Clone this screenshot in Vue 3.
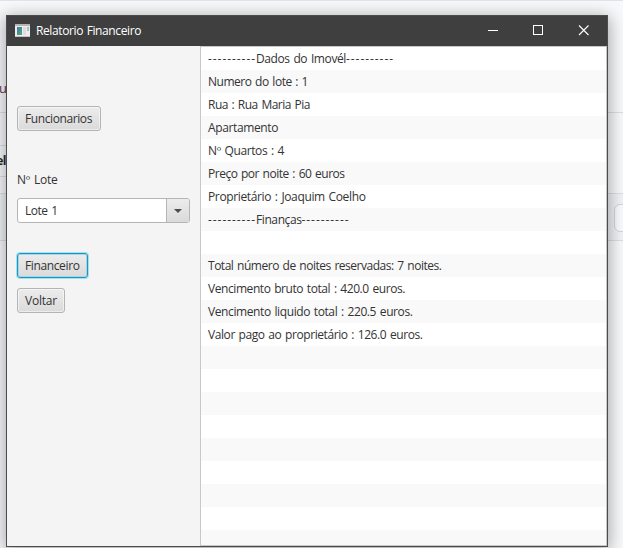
<script setup>
const dashes = { text: '----------', width: 48 }
const details = [
  [dashes, { text: 'Dados do Imovél', width: 90 }, dashes],
  [{ text: 'Numero do lote : 1', width: 100 }],
  [{ text: 'Rua : Rua Maria Pia', width: 102 }],
  [{ text: 'Apartamento', width: 70 }],
  [{ text: 'Nº Quartos : 4', width: 76 }],
  [{ text: 'Preço por noite : 60 euros', width: 136.5 }],
  [{ text: 'Proprietário : Joaquim Coelho', width: 157.5 }],
  [dashes, { text: 'Finanças', width: 45.5 }, dashes],
  [],
  [{ text: 'Total número de noites reservadas: 7 noites.', width: 233.5 }],
  [{ text: 'Vencimento bruto total : 420.0 euros.', width: 197 }],
  [{ text: 'Vencimento liquido total : 220.5 euros.', width: 204.5 }],
  [{ text: 'Valor pago ao proprietário : 126.0 euros.', width: 214.5 }]
]
const rows = Array.from({ length: 22 }, (_, i) => details[i] || [])

// Spreads a label's letters so that it fills its nominal width.
const vFit = {
  mounted(el, { value }) {
    const n = el.textContent.length
    if (!n || !value) return
    el.style.letterSpacing = (value - el.getBoundingClientRect().width) / n + 'px'
  }
}
</script>

<template>
  <div class="desktop">
    <div class="backdrop">
      <div class="band top"><span class="frag">u</span></div>
      <div class="band second"></div>
      <div class="band third"><b class="frag">el</b></div>
      <div class="band fourth"></div>
      <div class="band fifth"><i class="stub"></i></div>
    </div>
    <section class="window">
      <header class="titlebar">
        <svg class="app-icon" width="15" height="13" viewBox="0 0 15 13">
          <defs>
            <linearGradient id="pane" x1="0" y1="0" x2="1" y2="1">
              <stop offset="0" stop-color="#4777a3" />
              <stop offset="1" stop-color="#4fae79" />
            </linearGradient>
          </defs>
          <rect width="15" height="13" fill="#eeecee" />
          <rect width="15" height="2" fill="#b7b3b4" />
          <rect x="2" y="3" width="5" height="8" fill="url(#pane)" />
          <rect x="8" y="3" width="3" height="8" fill="#dedcde" />
          <rect x="12" y="3" width="2" height="4" fill="#9cc6c0" />
          <path d="M0 12.5H15" stroke="#c5c1c3" />
        </svg>
        <h1 class="title"><span v-fit="105">Relatorio Financeiro</span></h1>
        <div class="controls">
          <svg width="46" height="30" viewBox="0 0 46 30"><path d="M18 14.5h10" stroke="#fff" /></svg>
          <svg width="45" height="30" viewBox="0 0 45 30"><rect x="17.5" y="9.500" width="9" height="9" fill="none" stroke="#fff" /></svg>
          <svg width="46" height="30" viewBox="0 0 46 30"><path d="M18 9.500l9.500 9.500M27.500 9.500l-9.500 9.500" stroke="#fff" stroke-width="1.1" /></svg>
        </div>
      </header>
      <main class="content">
        <aside class="side">
          <button class="btn staff"><span v-fit="67">Funcionarios</span></button>
          <label class="label"><span v-fit="40.5">Nº Lote</span></label>
          <div class="combo">
            <div class="value"><span v-fit="32.5">Lote 1</span></div>
            <div class="arrow"><svg width="8" height="4" viewBox="0 0 8 4"><path d="M0 0H8L4 4Z" fill="#4c4c4c" /></svg></div>
          </div>
          <button class="btn finance focused"><span v-fit="54.5">Financeiro</span></button>
          <button class="btn back"><span v-fit="32">Voltar</span></button>
        </aside>
        <ul class="list">
          <li v-for="(row, i) in rows" :key="i">
            <span v-for="(part, j) in row" :key="j" v-fit="part.width">{{ part.text }}</span>
          </li>
        </ul>
      </main>
    </section>
  </div>
</template>

<style>
body { margin: 0; overflow: hidden; }
</style>

<style scoped>
* { box-sizing: border-box; }
.desktop {
  position: relative;
  width: 623px;
  height: 548px;
  padding: 14px 15px 1px 6px;
  overflow: hidden;
  background: #f8f9fb;
  border-top: 1px solid #e0e2ea;
  font: 12px/16px "Open Sans", "Noto Sans", sans-serif;
  word-spacing: 1px;
  color: #333;
}
.backdrop { position: absolute; inset: 0; padding-top: 75px; }
.band { border-bottom: 1px solid #dcdfe4; }
.top { height: 37px; }
.second { width: 300px; height: 33px; }
.third { width: 300px; height: 31px; padding-top: 7px; }
.fourth { height: 17px; }
.fifth { height: 47px; background: #f1f3f6; padding: 10px 0 0 614px; }
.frag { display: flex; justify-content: flex-end; width: 7px; font-size: 13px; color: #6c3050; }
.top .frag { padding-top: 4px; }
b.frag { width: 6px; font-size: 12px; letter-spacing: -.5px; color: #24292e; }
.stub { display: block; width: 20px; height: 28px; border: 1px solid #d2d6da; border-radius: 6px; background: #fafbfc; }
.window {
  position: relative;
  display: flex;
  flex-direction: column;
  width: 602px;
  height: 532px;
  border: 1px solid #4b4d4b;
  background: #f4f4f4;
  box-shadow: 0 3px 16px 1px rgba(0, 0, 0, .36);
}
.titlebar { display: flex; align-items: center; height: 30px; background: #3f3f3f; padding-left: 8px; }
.app-icon { margin-top: -1px; }
.title { margin: 0 0 0 6px; font: inherit; color: #fff; white-space: nowrap; }
.controls { display: flex; margin-left: auto; }
.content { display: flex; flex: 1; }
.side { display: flex; flex-direction: column; align-items: flex-start; width: 193px; padding: 60px 10px 0; }
.btn {
  height: 25px;
  padding: 0 7px;
  border: 1px solid #b4b4b4;
  border-radius: 3px;
  background: linear-gradient(#ececec, #dadada);
  box-shadow: inset 0 0 0 1px rgba(255, 255, 255, .5);
  font: inherit;
  text-align: left;
  color: #333;
  white-space: nowrap;
}
.staff { width: 84px; }
.finance { width: 71px; margin-top: 30px; }
.back { width: 48px; margin-top: 10px; }
.focused { border-color: #1798c4; box-shadow: 0 0 0 1px #a5dff0, inset 0 0 0 1px #a9d5e3; }
.label { margin-top: 41px; height: 16px; white-space: nowrap; }
.combo { display: flex; width: 173px; height: 25px; margin-top: 10px; border: 1px solid #b5b5b5; border-radius: 3px; background: #fff; overflow: hidden; }
.value { flex: 1; padding: 4px 7px; white-space: nowrap; }
.arrow { display: flex; align-items: center; justify-content: center; width: 23px; border-left: 1px solid #b5b5b5; background: linear-gradient(#ececec, #dadada); }
.list { flex: 1; height: 500px; margin: 0; padding: 0; list-style: none; border: 1px solid #c8c8c8; background: #fff; overflow: hidden; }
.list li { display: flex; height: 23px; padding: 4px 7px 3px; white-space: pre; }
.list li:nth-child(even) { background: #f9f9f9; }
</style>
